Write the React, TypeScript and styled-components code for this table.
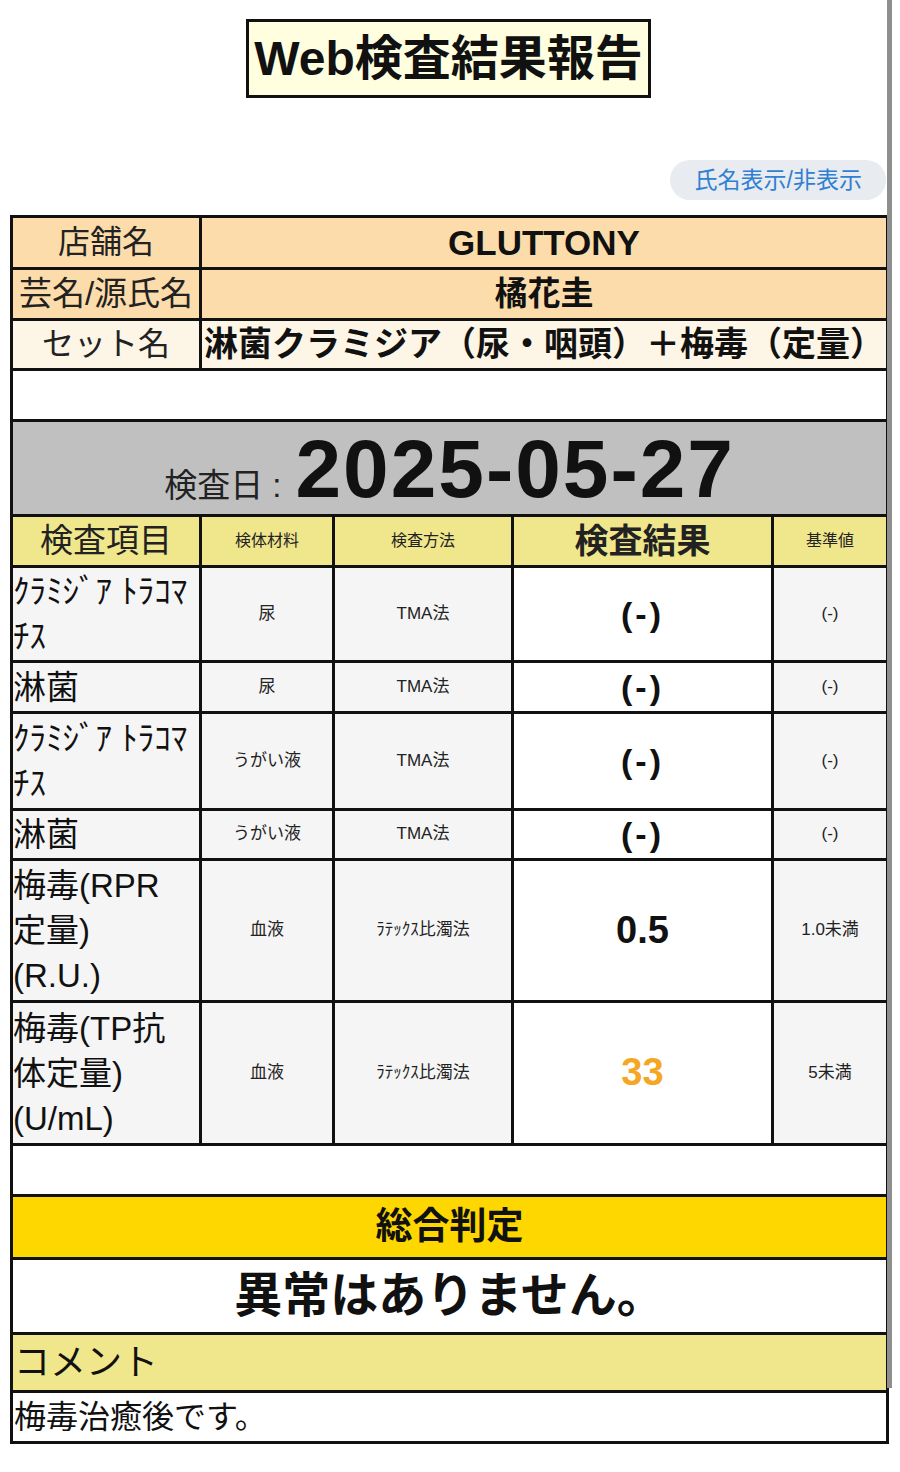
import React from "react";
import styled, { createGlobalStyle } from "styled-components";

const GlobalStyle = createGlobalStyle`
  html, body {
    margin: 0;
    padding: 0;
    background: #ffffff;
  }
  body {
    font-family: "Liberation Sans", "Noto Sans CJK JP", sans-serif;
    color: #111;
  }
`;

const Page = styled.div`
  display: flex;
  align-items: flex-start;
  width: 892px;
  padding-bottom: 28px;
`;

const Content = styled.div`
  width: 877px;
  margin-left: 10px;
  display: flex;
  flex-direction: column;
`;

const ScrollEdge = styled.div`
  width: 5px;
  height: 1388px;
  background: #8e8e8e;
  flex-shrink: 0;
`;

const TitleWrap = styled.div`
  display: flex;
  justify-content: center;
  padding-top: 19px;
`;

const TitleBox = styled.h1`
  margin: 0;
  box-sizing: border-box;
  height: 79px;
  padding: 0 5px;
  display: flex;
  align-items: center;
  background: #ffffe0;
  border: 3px solid #111;
  font-size: 48px;
  font-weight: 700;
  line-height: 1;
  color: #111;
`;

const ToggleRow = styled.div`
  display: flex;
  justify-content: flex-end;
  margin-top: 62px;
  margin-right: 1px;
`;

const ToggleButton = styled.button`
  height: 40px;
  padding: 0 24px 0 25px;
  border: none;
  border-radius: 20px;
  background: #e8ebef;
  color: #2f7fd3;
  font-family: "Liberation Sans", "Noto Sans CJK JP", sans-serif;
  font-size: 23px;
  line-height: 1;
`;

const ReportTable = styled.table`
  margin-top: 15px;
  width: 876px;
  border-collapse: collapse;
  table-layout: fixed;
`;

const Row = styled.tr<{ $h: number }>`
  height: ${(p) => p.$h}px;
`;

const Cell = styled.td<{
  $bg?: string;
  $size?: number;
  $bold?: boolean;
  $align?: "left" | "center";
  $color?: string;
}>`
  border: 3px solid #111;
  background: ${(p) => p.$bg ?? "#ffffff"};
  font-size: ${(p) => p.$size ?? 17}px;
  font-weight: ${(p) => (p.$bold ? 700 : 400)};
  text-align: ${(p) => p.$align ?? "center"};
  color: ${(p) => p.$color ?? "#222"};
  padding: 0 1px;
  vertical-align: middle;
  line-height: 1.2;
  white-space: normal;
`;

const ItemCell = styled(Cell)`
  font-size: 33px;
  line-height: 45px;
  text-align: left;
  padding: 1px 0;
  color: #111;
`;

const ResultText = styled.span`
  letter-spacing: 3px;
`;

const DateCell = styled.td`
  border: 3px solid #111;
  background: #c0c0c0;
  padding: 0;
  vertical-align: middle;
`;

const DateLine = styled.div`
  display: flex;
  justify-content: center;
  align-items: baseline;
  padding-top: 2px;
`;

const DateLabel = styled.span`
  font-size: 33px;
  color: #222;
  margin-right: 14px;
`;

const DateValue = styled.span`
  font-size: 82px;
  font-weight: 700;
  letter-spacing: 2px;
  line-height: 1;
  color: #111;
`;

const PEACH = "#fddcab";
const LACE = "#fdf5e6";
const KHAKI = "#f0e68c";
const GREY = "#f5f5f5";
const GOLD = "#ffd700";

type Result = {
  name: React.ReactNode;
  material: string;
  method: string;
  result: string;
  resultColor?: string;
  resultSize: number;
  reference: string;
  h: number;
};

const results: Result[] = [
  {
    name: "ｸﾗﾐｼﾞｱ ﾄﾗｺﾏﾁｽ",
    material: "尿",
    method: "TMA法",
    result: "(-)",
    resultSize: 34,
    reference: "(-)",
    h: 95,
  },
  {
    name: "淋菌",
    material: "尿",
    method: "TMA法",
    result: "(-)",
    resultSize: 34,
    reference: "(-)",
    h: 51,
  },
  {
    name: "ｸﾗﾐｼﾞｱ ﾄﾗｺﾏﾁｽ",
    material: "うがい液",
    method: "TMA法",
    result: "(-)",
    resultSize: 34,
    reference: "(-)",
    h: 97,
  },
  {
    name: "淋菌",
    material: "うがい液",
    method: "TMA法",
    result: "(-)",
    resultSize: 34,
    reference: "(-)",
    h: 50,
  },
  {
    name: (
      <>
        梅毒(RPR
        <br />
        定量)
        <br />
        (R.U.)
      </>
    ),
    material: "血液",
    method: "ﾗﾃｯｸｽ比濁法",
    result: "0.5",
    resultSize: 38,
    reference: "1.0未満",
    h: 142,
  },
  {
    name: (
      <>
        梅毒(TP抗
        <br />
        体定量)
        <br />
        (U/mL)
      </>
    ),
    material: "血液",
    method: "ﾗﾃｯｸｽ比濁法",
    result: "33",
    resultColor: "#f5a623",
    resultSize: 38,
    reference: "5未満",
    h: 143,
  },
];

export default function App() {
  return (
    <>
      <GlobalStyle />
      <Page>
        <Content>
          <TitleWrap>
            <TitleBox>Web検査結果報告</TitleBox>
          </TitleWrap>
          <ToggleRow>
            <ToggleButton type="button">氏名表示/非表示</ToggleButton>
          </ToggleRow>
          <ReportTable>
            <colgroup>
              <col style={{ width: 189 }} />
              <col style={{ width: 133 }} />
              <col style={{ width: 179 }} />
              <col style={{ width: 260 }} />
              <col style={{ width: 115 }} />
            </colgroup>
            <tbody>
              <Row $h={52}>
                <Cell $bg={PEACH} $size={32}>店舗名</Cell>
                <Cell $bg={PEACH} $size={35} $bold colSpan={4} $color="#111">
                  GLUTTONY
                </Cell>
              </Row>
              <Row $h={51}>
                <Cell $bg={PEACH} $size={33}>芸名/源氏名</Cell>
                <Cell $bg={PEACH} $size={33} $bold colSpan={4} $color="#111">
                  橘花圭
                </Cell>
              </Row>
              <Row $h={50}>
                <Cell $bg={LACE} $size={32}>
                  セット名
                </Cell>
                <Cell $bg={LACE} $size={34} $bold colSpan={4} $color="#111">
                  淋菌クラミジア（尿・咽頭）＋梅毒（定量）
                </Cell>
              </Row>
              <Row $h={51}>
                <Cell colSpan={5} />
              </Row>
              <Row $h={95}>
                <DateCell colSpan={5}>
                  <DateLine>
                    <DateLabel>検査日 :</DateLabel>
                    <DateValue>2025-05-27</DateValue>
                  </DateLine>
                </DateCell>
              </Row>
              <Row $h={51}>
                <Cell $bg={KHAKI} $size={33}>検査項目</Cell>
                <Cell $bg={KHAKI} $size={16}>検体材料</Cell>
                <Cell $bg={KHAKI} $size={16}>検査方法</Cell>
                <Cell $bg={KHAKI} $size={34} $bold>
                  検査結果
                </Cell>
                <Cell $bg={KHAKI} $size={16}>基準値</Cell>
              </Row>
              {results.map((r, i) => (
                <Row $h={r.h} key={i}>
                  <ItemCell $bg={GREY}>{r.name}</ItemCell>
                  <Cell $bg={GREY} $size={17}>{r.material}</Cell>
                  <Cell $bg={GREY} $size={17}>{r.method}</Cell>
                  <Cell $size={r.resultSize} $bold $color={r.resultColor ?? "#111"}>
                    {r.result === "(-)" ? <ResultText>{r.result}</ResultText> : r.result}
                  </Cell>
                  <Cell $bg={GREY} $size={17}>{r.reference}</Cell>
                </Row>
              ))}
              <Row $h={51}>
                <Cell colSpan={5} />
              </Row>
              <Row $h={63}>
                <Cell colSpan={5} $bg={GOLD} $size={37} $bold $color="#111">
                  総合判定
                </Cell>
              </Row>
              <Row $h={75}>
                <Cell colSpan={5} $size={48} $bold $color="#111">
                  異常はありません。
                </Cell>
              </Row>
              <Row $h={58}>
                <Cell colSpan={5} $bg={KHAKI} $size={36} $align="left" $color="#111">
                  コメント
                </Cell>
              </Row>
              <Row $h={51}>
                <Cell colSpan={5} $size={32} $align="left" $color="#111">
                  梅毒治癒後です。
                </Cell>
              </Row>
            </tbody>
          </ReportTable>
        </Content>
        <ScrollEdge />
      </Page>
    </>
  );
}
